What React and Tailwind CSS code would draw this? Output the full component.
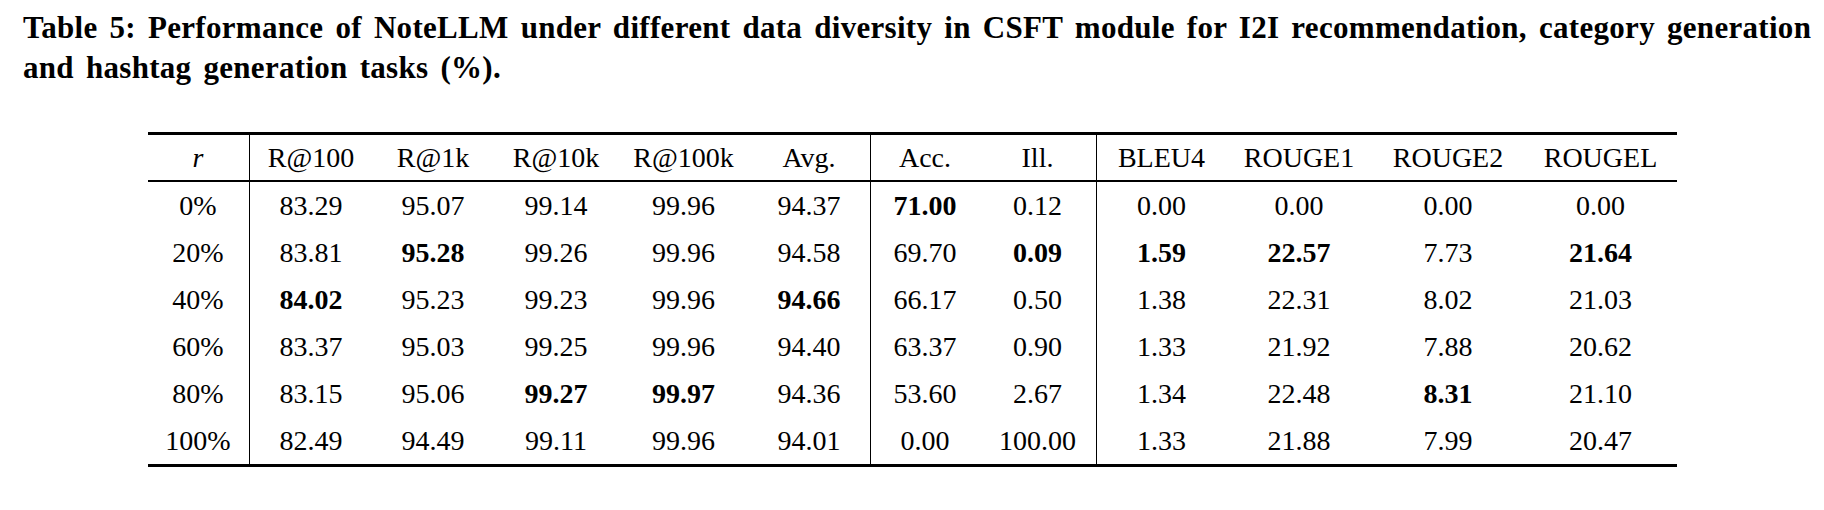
import React from 'react'

const cols = 'grid grid-cols-[101px_124px_121px_125px_130px_121px_110px_116px_131px_145px_153px_152px]'

// cells that need a rule on their left edge
const ruled = [1, 6, 8]

const header = ['R@100', 'R@1k', 'R@10k', 'R@100k', 'Avg.', 'Acc.', 'Ill.', 'BLEU4', 'ROUGE1', 'ROUGE2', 'ROUGEL']

// values; a leading * marks a bold (best) score
const rows = [
  ['0%', '83.29', '95.07', '99.14', '99.96', '94.37', '*71.00', '0.12', '0.00', '0.00', '0.00', '0.00'],
  ['20%', '83.81', '*95.28', '99.26', '99.96', '94.58', '69.70', '*0.09', '*1.59', '*22.57', '7.73', '*21.64'],
  ['40%', '*84.02', '95.23', '99.23', '99.96', '*94.66', '66.17', '0.50', '1.38', '22.31', '8.02', '21.03'],
  ['60%', '83.37', '95.03', '99.25', '99.96', '94.40', '63.37', '0.90', '1.33', '21.92', '7.88', '20.62'],
  ['80%', '83.15', '95.06', '*99.27', '*99.97', '94.36', '53.60', '2.67', '1.34', '22.48', '*8.31', '21.10'],
  ['100%', '82.49', '94.49', '99.11', '99.96', '94.01', '0.00', '100.00', '1.33', '21.88', '7.99', '20.47'],
]

const Cell = ({ i, children }) => (
  <div
    className={`flex items-center justify-center h-full ${ruled.includes(i) ? 'border-l border-black' : ''}`}
  >
    {children}
  </div>
)

const App = () => {
  return (
    <div className="w-[1824px] h-[510px] bg-white text-black font-['Liberation_Serif',serif]">
      <div className="pl-[23px] pt-[8px] text-[31px] leading-[40px] font-bold tracking-[0.3px] [word-spacing:4px] whitespace-nowrap">
        Table 5: Performance of NoteLLM under different data diversity in CSFT module for I2I recommendation, category generation
        <br />
        and hashtag generation tasks (%).
      </div>

      <div className="mx-auto mt-[44px] w-[1529px] text-[28px] border-t-[3px] border-b-[3px] border-black">
        <div className={`${cols} h-[47px] border-b-[2px] border-black`}>
          <Cell i={0}>
            <span className="italic">r</span>
          </Cell>
          {header.map((h, k) => (
            <Cell key={h} i={k + 1}>
              {h}
            </Cell>
          ))}
        </div>
        {rows.map((row) => (
          <div key={row[0]} className={`${cols} h-[47px]`}>
            {row.map((v, k) => (
              <Cell key={k} i={k}>
                {v.startsWith('*') ? <span className="font-bold">{v.slice(1)}</span> : v}
              </Cell>
            ))}
          </div>
        ))}
      </div>
    </div>
  )
}

export default App
